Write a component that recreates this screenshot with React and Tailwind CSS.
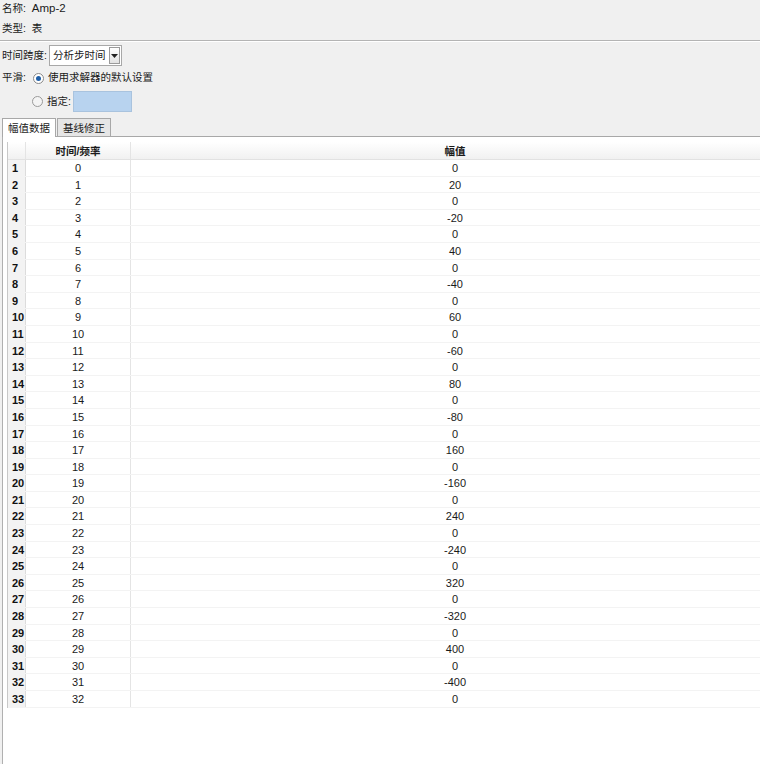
import React from 'react';

const amps = [0, 20, 0, -20, 0, 40, 0, -40, 0, 60, 0, -60, 0, 80, 0, -80, 0, 160, 0, -160, 0, 240, 0, -240, 0, 320, 0, -320, 0, 400, 0, -400, 0];

const font = { fontFamily: '"Liberation Sans", "Noto Sans CJK SC", sans-serif' };

export default function App() {
  return (
    <div className="w-[760px] h-[764px] overflow-hidden bg-[#f0f0f0] text-[10.5px] text-[#1a1a1a] flex flex-col whitespace-nowrap" style={font}>
      {/* header info */}
      <div className="px-[2px]">
        <div className="h-[17px] leading-[17px]">名称:&nbsp; <span className="text-[11.5px]">Amp-2</span></div>
        <div className="h-[22px] leading-[22px]">类型:&nbsp; 表</div>
      </div>
      <div className="border-t border-[#b4b4b4] border-b border-b-white mt-[1px]"></div>

      {/* settings */}
      <div className="px-[2px] pt-[3px]">
        <div className="flex items-center h-[21px]">
          <span>时间跨度:</span>
          <div className="ml-[2px] h-[21px] w-[73px] shrink-0 bg-white border border-[#a8a8a8] flex items-center justify-between pl-[3px] pr-[1px]">
            <span>分析步时间</span>
            <div className="w-[11px] h-[17px] border border-[#9a9a9a] bg-gradient-to-b from-white to-[#e2e2e2] flex items-center justify-center">
              <svg width="7" height="4" viewBox="0 0 7 4"><path d="M0 0h7L3.5 4z" fill="#222" /></svg>
            </div>
          </div>
        </div>
        <div className="flex items-center h-[22px] mt-[1px]">
          <span>平滑:</span>
          <span className="ml-[7px] w-[11px] h-[11px] rounded-full border border-[#8a8a8a] bg-white flex items-center justify-center">
            <span className="w-[5px] h-[5px] rounded-full bg-[#1f5fa8]"></span>
          </span>
          <span className="ml-[4px]">使用求解器的默认设置</span>
        </div>
        <div className="flex items-center h-[21px] mt-[2px] pl-[30px]">
          <span className="w-[11px] h-[11px] rounded-full border border-[#9a9a9a] bg-[#f4f4f4]"></span>
          <span className="ml-[4px]">指定:</span>
          <div className="ml-[2px] w-[59px] h-[21px] bg-[#b8d3ef] border border-[#a9c3de]"></div>
        </div>
      </div>

      {/* tabs */}
      <div className="flex items-end h-[24px] pl-[2px]">
        <div className="h-[19px] px-[5px] leading-[19px] bg-white border border-[#a8a8a8] border-b-0 relative z-10 -mb-[1px]">幅值数据</div>
        <div className="h-[18px] px-[5px] leading-[18px] ml-[1px] bg-[#e6e6e6] border border-[#a8a8a8] border-b-0">基线修正</div>
      </div>

      {/* panel */}
      <div className="flex-1 border-t border-[#a8a8a8] border-l border-l-[#b0b0b0] ml-[2px] bg-white pl-[4px] pt-[5px]">
        <div className="border-l border-[#c8c8c8]">
          <div className="flex h-[18px] bg-gradient-to-b from-white to-[#f1f1f1] border-b border-[#e2e2e2] font-bold">
            <div className="w-[18px] shrink-0 border-r border-[#e4e4e4]"></div>
            <div className="w-[105px] shrink-0 text-center leading-[18px] border-r border-[#e4e4e4]">时间/频率</div>
            <div className="w-[648px] shrink-0 text-center leading-[18px]">幅值</div>
          </div>
          {amps.map((a, i) => (
            <div key={i} className="flex h-[16.6px] leading-[16px] border-b border-[#f3f3f3] text-[11px]">
              <div className="w-[18px] shrink-0 bg-[#f3f3f3] border-r border-[#dcdcdc] font-bold pl-[4px] text-[#111]">{i + 1}</div>
              <div className="w-[105px] shrink-0 text-center border-r border-[#e4e4e4]">{i}</div>
              <div className="w-[648px] shrink-0 text-center">{a}</div>
            </div>
          ))}
        </div>
      </div>
    </div>
  );
}
